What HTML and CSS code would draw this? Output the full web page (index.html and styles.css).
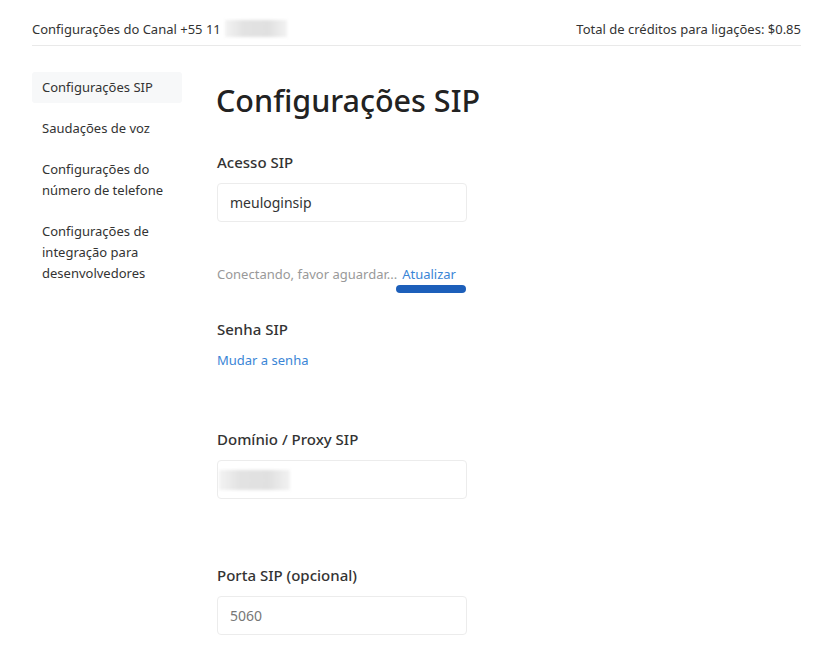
FILE: index.html
```html
<!DOCTYPE html>
<html lang="pt-BR">
<head>
<meta charset="utf-8">
<title>Configurações SIP</title>
<link rel="stylesheet" href="styles.css">
</head>
<body>
<div class="page">
  <header class="topbar">
    <div class="channel">Configurações do Canal +55 11 <span class="blur blur-phone"></span></div>
    <div class="credits">Total de créditos para ligações: $0.85</div>
  </header>
  <div class="layout">
    <nav class="sidebar">
      <a class="nav-item active">Configurações SIP</a>
      <a class="nav-item">Saudações de voz</a>
      <a class="nav-item">Configurações do número de telefone</a>
      <a class="nav-item">Configurações de integração para desenvolvedores</a>
    </nav>
    <main class="content">
      <h1 class="title">Configurações SIP</h1>
      <section class="field">
        <div class="label">Acesso SIP</div>
        <div class="input">meuloginsip</div>
        <div class="status">
          <span class="muted">Conectando, favor aguardar...</span>
          <span class="link-wrap"><a class="link">Atualizar</a><span class="underline-bar"></span></span>
        </div>
      </section>
      <section class="field pwd">
        <div class="label">Senha SIP</div>
        <a class="link">Mudar a senha</a>
      </section>
      <section class="field domain">
        <div class="label">Domínio / Proxy SIP</div>
        <div class="input input-blur"><span class="blur blur-domain"></span></div>
      </section>
      <section class="field port">
        <div class="label">Porta SIP (opcional)</div>
        <div class="input placeholder">5060</div>
      </section>
    </main>
  </div>
</div>
</body>
</html>
```
FILE: styles.css
```css
* { box-sizing: border-box; }
html, body { margin: 0; padding: 0; background: #fff; }
body {
  font-family: "Noto Sans", "Open Sans", sans-serif;
  color: #333;
  font-size: 13px;
}
.page { padding: 0 37px 0 32px; }
.topbar {
  display: flex;
  justify-content: space-between;
  align-items: center;
  height: 46px;
  padding-top: 12px;
  border-bottom: 1px solid #e9e9e9;
  font-size: 13px;
  color: #333;
}
.channel { display: flex; align-items: center; }
.blur {
  display: inline-block;
  background: linear-gradient(90deg, #f3f3f3 0%, #e2e2e2 30%, #e0e0e0 70%, #f2f2f2 100%);
  filter: blur(1.5px);
}
.blur-phone { width: 62px; height: 17px; margin-left: 4px; }
.layout { display: flex; padding-top: 26px; }
.sidebar { width: 150px; display: flex; flex-direction: column; margin-right: 34px; }
.nav-item {
  display: block;
  padding: 5px 10px;
  line-height: 21px;
  font-size: 13px;
  color: #333;
  margin-bottom: 10px;
  border-radius: 3px;
}
.nav-item.active { background: #f7f8f9; }
.content { flex: 1; padding-left: 1px; }
.title {
  margin: 8px 0 0 -1px;
  font-size: 30.5px;
  font-weight: 500;
  line-height: 40px;
  color: #222;
}
.field { display: flex; flex-direction: column; align-items: flex-start; }
.label {
  font-size: 15px;
  font-weight: 500;
  color: #333;
  line-height: 20px;
  margin-top: 32px;
  margin-bottom: 11px;
}
.input {
  width: 250px;
  height: 39px;
  border: 1px solid #ececec;
  border-radius: 4px;
  padding: 0 12px;
  display: flex;
  align-items: center;
  font-size: 14px;
  color: #333;
}
.input.placeholder { color: #777; }
.input-blur { padding: 0 0 0 1px; }
.blur-domain { width: 71px; height: 20px; }
.status { margin-top: 43px; display: flex; align-items: flex-start; font-size: 13px; line-height: 18px; }
.muted { color: #999; }
.link-wrap { display: flex; flex-direction: column; align-items: flex-start; margin-left: 5px; }
.link { color: #3a85d6; text-decoration: none; font-size: 13px; line-height: 18px; }
.underline-bar {
  display: block;
  width: 70px;
  height: 8px;
  border-radius: 4px;
  background: #1d5fba;
  margin-left: -6px;
  margin-top: 2px;
}
.field.pwd .label { margin-top: 26px; margin-bottom: 12px; }
.field.domain .label { margin-top: 60px; }
.field.port .label { margin-top: 66px; }
```
